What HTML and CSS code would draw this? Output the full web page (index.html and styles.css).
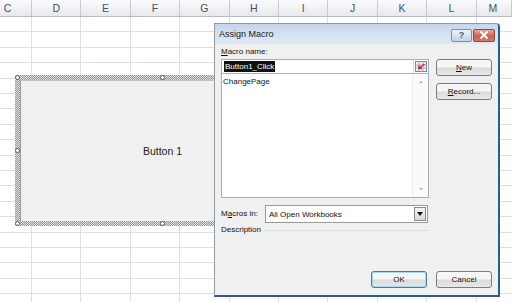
FILE: index.html
```html
<!DOCTYPE html>
<html lang="en">

<head>
  <meta charset="UTF-8">
  <meta name="viewport" content="width=device-width, initial-scale=1.0">
  <title>Assign Macro</title>
  <link rel="stylesheet" href="styles.css">
</head>

<body>
  <div class="sheet">
    <div class="col-heads">
      <div class="head first">C</div>
      <div class="head">D</div>
      <div class="head">E</div>
      <div class="head">F</div>
      <div class="head">G</div>
      <div class="head">H</div>
      <div class="head">I</div>
      <div class="head">J</div>
      <div class="head">K</div>
      <div class="head">L</div>
      <div class="head last">M</div>
    </div>
    <div class="cells">
      <div class="col first"></div>
      <div class="col"></div>
      <div class="col"></div>
      <div class="col"></div>
      <div class="col"></div>
      <div class="col"></div>
      <div class="col"></div>
      <div class="col"></div>
      <div class="col"></div>
      <div class="col"></div>
      <div class="col last"></div>
    </div>

    <!-- form button drawn on the sheet, selected -->
    <div class="shape">
      <div class="shape-face">Button 1</div>
      <span class="handle h-tl"></span>
      <span class="handle h-tm"></span>
      <span class="handle h-ml"></span>
      <span class="handle h-bl"></span>
      <span class="handle h-bm"></span>
    </div>
  </div>

  <div class="dialog">
    <div class="titlebar">
      <span class="title">Assign Macro</span>
      <div class="win-btns">
        <div class="win-btn help">?</div>
        <div class="win-btn close">
          <svg width="10" height="8" viewBox="0 0 10 8">
            <path d="M1.5 0.5 L8.5 7.5 M8.5 0.5 L1.5 7.5" stroke="#fff" stroke-width="2" />
          </svg>
        </div>
      </div>
    </div>

    <div class="main">
      <div class="left">
        <div class="label"><u>M</u>acro name:</div>
        <div class="name-field">
          <span class="sel">Button1_Click</span>
          <div class="ref-btn">
            <svg width="12" height="11" viewBox="0 0 12 11">
              <rect x="0.5" y="0.5" width="11" height="10" fill="#eaf1fa" stroke="#6f86a6" />
              <path d="M0.5 4 H11.5 M0.5 7 H11.5 M4 0.5 V10.5 M8 0.5 V10.5" stroke="#9fb2cb" stroke-width="1" />
              <path d="M9.5 3 L4.5 7 M4 4.5 V7.5 H7" stroke="#d8262b" stroke-width="1.6" fill="none" />
            </svg>
          </div>
        </div>
        <div class="listbox">
          <div class="items">
            <div class="item">ChangePage</div>
          </div>
          <div class="scroll">
            <span class="arrow up"></span>
            <span class="arrow down"></span>
          </div>
        </div>

        <div class="macros-row">
          <span class="label">M<u>a</u>cros in:</span>
          <div class="select">
            <span>All Open Workbooks</span>
            <div class="drop">
              <span class="tri"></span>
            </div>
          </div>
        </div>

        <div class="desc-row">
          <span class="label">Description</span>
          <span class="rule"></span>
        </div>
      </div>

      <div class="right">
        <div class="btn"><u>N</u>ew</div>
        <div class="btn"><u>R</u>ecord...</div>
      </div>
    </div>

    <div class="footer">
      <div class="btn default">OK</div>
      <div class="btn">Cancel</div>
    </div>
  </div>
</body>

</html>
```

FILE: styles.css
```css
* {
  margin: 0;
  padding: 0;
  box-sizing: border-box;
}

body {
  width: 512px;
  height: 302px;
  overflow: hidden;
  background: #fff;
  font-family: "Liberation Sans", Arial, sans-serif;
  position: relative;
}

/* ---------- worksheet ---------- */

.sheet {
  position: relative;
  height: 302px;
}

.col-heads {
  display: flex;
  height: 17px;
  border-bottom: 1px solid #b6bcc4;
}

.head {
  flex: 0 0 49.4px;
  background: linear-gradient(#fafbfc, #e6e9ed);
  border-right: 1px solid #c9cdd3;
  color: #4a515b;
  font-size: 10.5px;
  line-height: 16px;
  text-align: center;
}

.head.first {
  flex-basis: 32px;
  text-indent: -16px;
}

.head.last {
  flex: 1 0 auto;
  text-indent: -2px;
  text-align: left;
  padding-left: 14px;
}

.cells {
  display: flex;
  height: 285px;
}

.col {
  flex: 0 0 49.4px;
  border-right: 1px solid #dcdfe4;
  background: repeating-linear-gradient(to bottom, transparent 0 14.4px, #dcdfe4 14.4px 15.4px);
}

.col.first {
  flex-basis: 32px;
}

.col.last {
  flex: 1 0 auto;
  border-right: none;
}

.shape {
  position: absolute;
  left: 15px;
  top: 75px;
  width: 294px;
  height: 151px;
  padding: 5px;
  background: repeating-conic-gradient(#959595 0 25%, #e2e2e2 0 50%) 0 0 / 2px 2px;
}

.shape-face {
  height: 100%;
  background: #f0f0f0;
  border-left: 1px solid #9a9a9a;
  border-top: 1px solid #c4c4c4;
  display: flex;
  align-items: center;
  justify-content: center;
  font-size: 10.5px;
  color: #1c1c1c;
}

.handle {
  position: absolute;
  width: 5px;
  height: 5px;
  border: 1px solid #555;
  border-radius: 50%;
  background: #fff;
}

.h-tl { left: 0; top: 0; }
.h-tm { left: 145px; top: 0; }
.h-ml { left: 0; top: 73px; }
.h-bl { left: 0; bottom: 0; }
.h-bm { left: 145px; bottom: 0; }

/* ---------- dialog ---------- */

.dialog {
  position: absolute;
  left: 214px;
  top: 23px;
  width: 286px;
  height: 274px;
  background: #f0f0f0;
  border: 1px solid #8f9aa6;
  border-right: 2px solid #2c5d8c;
  border-bottom: 2px solid #2c5d8c;
  border-top-right-radius: 4px;
  display: flex;
  flex-direction: column;
  font-size: 8px;
  color: #111;
}

.titlebar {
  height: 20px;
  display: flex;
  align-items: center;
  justify-content: space-between;
  padding: 0 3px 0 4px;
  background: linear-gradient(#c3d6ec, #d6e3f2 60%, #dfe9f4);
  border-top-right-radius: 3px;
}

.title {
  font-size: 9px;
  color: #1a1a1a;
}

.win-btns {
  display: flex;
  gap: 1px;
  margin-top: 2px;
}

.win-btn {
  width: 21px;
  height: 13px;
  border: 1px solid #7d8ea2;
  border-radius: 2px;
  display: flex;
  align-items: center;
  justify-content: center;
}

.help {
  background: linear-gradient(#edf2f8, #c3d1e2);
  color: #4a5a6e;
  font-size: 9px;
  font-weight: bold;
}

.close {
  width: 22px;
  background: linear-gradient(#e8aca2, #c9604f 55%, #d67a68);
  border-color: #8a4a40;
}

.main {
  display: flex;
  gap: 7px;
  padding: 0 6px 0 6px;
}

.left {
  width: 209px;
  display: flex;
  flex-direction: column;
}

.label {
  line-height: 14px;
  margin-top: 1px;
}

.name-field {
  height: 15px;
  background: #fff;
  border: 1px solid #abadb3;
  display: flex;
  align-items: center;
  justify-content: space-between;
  padding-left: 2px;
}

.sel {
  background: #111;
  color: #fff;
  line-height: 11px;
  padding: 0 1px;
}

.ref-btn {
  width: 15px;
  height: 13px;
  display: flex;
  align-items: center;
  justify-content: center;
  border-left: 1px solid #d6d6d6;
}

.listbox {
  height: 125px;
  margin-top: -1px;
  background: #fff;
  border: 1px solid #abadb3;
  display: flex;
}

.items {
  flex: 1;
  padding: 2px 0 0 1px;
}

.item {
  line-height: 12px;
}

.scroll {
  width: 16px;
  background: #fafafa;
  border-left: 1px solid #ececec;
  display: flex;
  flex-direction: column;
  justify-content: space-between;
  align-items: center;
  padding: 7px 0 7px;
}

.arrow {
  width: 0;
  height: 0;
  border-left: 2px solid transparent;
  border-right: 2px solid transparent;
}

.arrow.up {
  border-bottom: 2px solid #a8a8a8;
}

.arrow.down {
  border-top: 2px solid #a8a8a8;
}

.macros-row {
  display: flex;
  align-items: center;
  margin-top: 7px;
}

.macros-row .label {
  width: 44px;
  margin-top: 0;
}

.select {
  width: 163px;
  height: 18px;
  background: #fff;
  border: 1px solid #9a9a9a;
  display: flex;
  align-items: center;
  justify-content: space-between;
  padding-left: 3px;
}

.drop {
  width: 12px;
  height: 14px;
  margin-right: 1px;
  background: linear-gradient(#f4f4f4, #d8d8d8);
  border: 1px solid #8c8c8c;
  display: flex;
  align-items: center;
  justify-content: center;
}

.tri {
  width: 0;
  height: 0;
  border-left: 3px solid transparent;
  border-right: 3px solid transparent;
  border-top: 4px solid #111;
}

.desc-row {
  display: flex;
  align-items: center;
  height: 14px;
}

.desc-row .label {
  margin-top: 0;
}

.rule {
  flex: 1;
  height: 1px;
  margin-left: 4px;
  background: #d9dfe5;
}

.right {
  display: flex;
  flex-direction: column;
  gap: 7px;
  padding-top: 15px;
}

.btn {
  width: 56px;
  height: 17px;
  border: 1px solid #7c7c7c;
  border-radius: 3px;
  background: linear-gradient(#f6f6f6 45%, #dcdcdc 55%, #e8e8e8);
  display: flex;
  align-items: center;
  justify-content: center;
}

.footer {
  margin-top: auto;
  display: flex;
  justify-content: flex-end;
  gap: 9px;
  padding: 0 6px 7px 0;
}

.btn.default {
  border-color: #3c7fb1;
  box-shadow: inset 0 0 0 1px #a6d8f4;
}
```
